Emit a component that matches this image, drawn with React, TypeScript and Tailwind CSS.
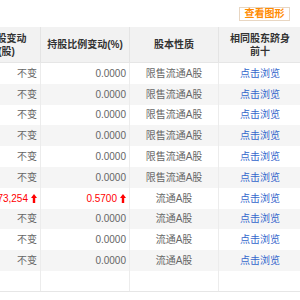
const rows = [
  { chg: "不变", pct: "0.0000", type: "限售流通A股" },
  { chg: "不变", pct: "0.0000", type: "限售流通A股" },
  { chg: "不变", pct: "0.0000", type: "限售流通A股" },
  { chg: "不变", pct: "0.0000", type: "限售流通A股" },
  { chg: "不变", pct: "0.0000", type: "限售流通A股" },
  { chg: "不变", pct: "0.0000", type: "限售流通A股" },
  { chg: "4,573,254", pct: "0.5700", type: "流通A股", up: true },
  { chg: "不变", pct: "0.0000", type: "流通A股" },
  { chg: "不变", pct: "0.0000", type: "流通A股" },
  { chg: "不变", pct: "0.0000", type: "流通A股" },
];

function UpArrow() {
  return (
    <svg width="6" height="9" viewBox="0 0 6 9" className="ml-[3px] shrink-0">
      <path d="M3 0 L6 4 L4.2 4 L4.2 9 L1.8 9 L1.8 4 L0 4 Z" fill="#ff0000" />
    </svg>
  );
}

export default function App() {
  return (
    <div className="w-[300px] h-[300px] overflow-hidden bg-white font-['Liberation_Sans','Noto_Sans_CJK_SC',sans-serif] text-[10px] text-[#666]">
      <div className="h-[27px] flex justify-end items-start pt-[7px] pr-[10px]">
        <div className="h-[14px] w-[51px] border border-[#e8d6c2] bg-white flex items-center justify-center text-[10px] font-bold text-[#ff8a00] leading-none">
          查看图形
        </div>
      </div>
      <div className="ml-[-27px] w-[328px]">
        <div className="flex h-[36px] bg-[#f2f2f2] border-b border-[#e6e6e6] text-[#333] font-bold leading-[13px]">
          <div className="w-[68px] border-r border-[#e4e4e4] flex items-center justify-center text-center">
            持股变动<br />(股)
          </div>
          <div className="w-[89px] border-r border-[#e4e4e4] flex items-center justify-center">
            持股比例变动(%)
          </div>
          <div className="w-[89px] border-r border-[#e4e4e4] flex items-center justify-center">
            股本性质
          </div>
          <div className="w-[82px] flex items-center justify-center text-center">
            相同股东跻身<br />前十
          </div>
        </div>
        {rows.map((r, i) => (
          <div key={i} className={`flex h-[20.8px] ${i % 2 === 1 ? "bg-[#f5f5f5]" : "bg-white"}`}>
            <div className={`w-[68px] border-r border-[#ececec] flex items-center justify-end pr-[3px] whitespace-nowrap ${r.up ? "text-[#ff0000]" : ""}`}>
              {r.chg}
              {r.up && <UpArrow />}
            </div>
            <div className={`w-[89px] border-r border-[#ececec] flex items-center justify-end pr-[3px] ${r.up ? "text-[#ff0000]" : ""}`}>
              {r.pct}
              {r.up && <UpArrow />}
            </div>
            <div className="w-[89px] border-r border-[#ececec] flex items-center justify-center">
              {r.type}
            </div>
            <div className="w-[82px] flex items-center justify-center text-[#3366cc]">点击浏览</div>
          </div>
        ))}
        <div className="flex h-[20.8px] bg-white border-b border-[#e6e6e6]">
          <div className="w-[68px] border-r border-[#ececec]" />
          <div className="w-[89px] border-r border-[#ececec]" />
          <div className="w-[89px] border-r border-[#ececec]" />
          <div className="w-[82px]" />
        </div>
      </div>
    </div>
  );
}
